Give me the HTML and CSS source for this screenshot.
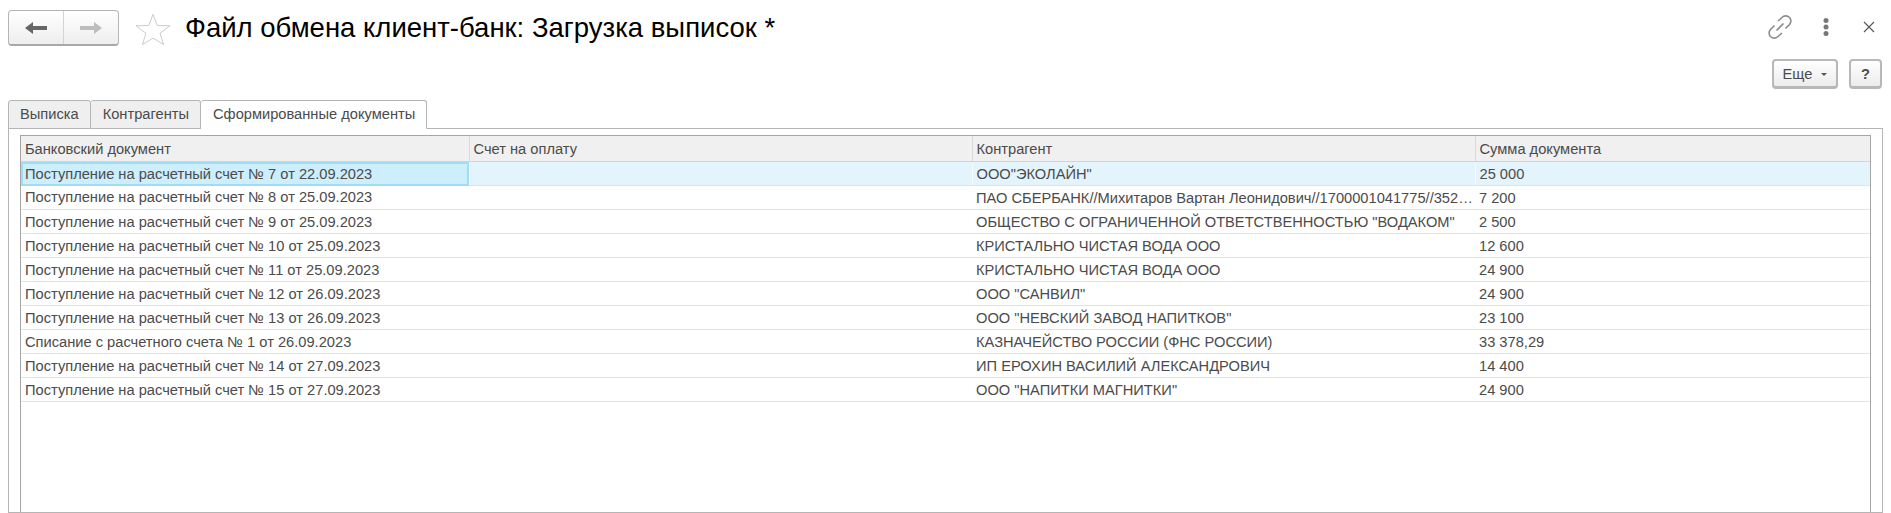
FILE: index.html
```html
<!DOCTYPE html>
<html lang="ru">

<head>
  <meta charset="UTF-8">
  <title>Файл обмена клиент-банк: Загрузка выписок</title>
  <link rel="stylesheet" href="styles.css">
</head>

<body>
  <div class="top-bar">
    <div class="nav-buttons">
      <button class="nav-btn">
        <svg width="22" height="14" viewBox="0 0 22 14"><path d="M0 7 L8 1 V5 H22 V9 H8 V13 Z" fill="#666"/></svg>
      </button>
      <button class="nav-btn">
        <svg width="22" height="14" viewBox="0 0 22 14"><path d="M22 7 L14 1 V5 H0 V9 H14 V13 Z" fill="#bdbdbd"/></svg>
      </button>
    </div>
    <svg class="star" width="36" height="33" viewBox="0 0 38 34"><path d="M19 1 L23.5 12.8 L37 13 L26.4 21 L30.2 33 L19 26 L7.8 33 L11.6 21 L1 13 L14.5 12.8 Z" fill="#fff" stroke="#c8c8c8"/></svg>
    <h1 class="title">Файл обмена клиент-банк: Загрузка выписок *</h1>
    <div class="top-icons">
      <svg class="icon-link" width="26" height="26" viewBox="0 0 26 26" fill="none" stroke="#8a8a8a" stroke-width="1.6"><path d="M11 7 L15 3.5 A5 5 0 0 1 22.5 10.5 L18.5 14.5"/><path d="M15 19 L11 22.5 A5 5 0 0 1 3.5 15.5 L7.5 11.5"/><path d="M9.5 16.5 L16.5 9.5"/></svg>
      <svg class="icon-dots" width="8" height="20" viewBox="0 0 8 20" fill="#777"><circle cx="4" cy="3.5" r="2.5"/><circle cx="4" cy="10" r="2.5"/><circle cx="4" cy="16.5" r="2.5"/></svg>
      <svg width="12" height="12" viewBox="0 0 12 12" stroke="#555" stroke-width="1.1"><path d="M1 1 L11 11 M11 1 L1 11"/></svg>
    </div>
  </div>

  <div class="command-bar">
    <button class="cmd-btn more-btn">Еще <span class="caret"></span></button>
    <button class="cmd-btn help-btn">?</button>
  </div>

  <div class="tabs">
    <div class="tab">Выписка</div>
    <div class="tab">Контрагенты</div>
    <div class="tab active">Сформированные документы</div>
  </div>

  <div class="panel">
    <div class="grid">
      <table>
        <colgroup>
          <col class="col-doc">
          <col class="col-invoice">
          <col class="col-partner">
          <col>
        </colgroup>
        <thead>
          <tr>
            <th>Банковский документ</th>
            <th>Счет на оплату</th>
            <th>Контрагент</th>
            <th>Сумма документа</th>
          </tr>
        </thead>
        <tbody>
          <tr class="current">
            <td class="focused">Поступление на расчетный счет № 7 от 22.09.2023</td>
            <td></td>
            <td>ООО"ЭКОЛАЙН"</td>
            <td>25 000</td>
          </tr>
          <tr>
            <td>Поступление на расчетный счет № 8 от 25.09.2023</td>
            <td></td>
            <td>ПАО СБЕРБАНК//Михитаров Вартан Леонидович//1700001041775//352…</td>
            <td>7 200</td>
          </tr>
          <tr>
            <td>Поступление на расчетный счет № 9 от 25.09.2023</td>
            <td></td>
            <td>ОБЩЕСТВО С ОГРАНИЧЕННОЙ ОТВЕТСТВЕННОСТЬЮ "ВОДАКОМ"</td>
            <td>2 500</td>
          </tr>
          <tr>
            <td>Поступление на расчетный счет № 10 от 25.09.2023</td>
            <td></td>
            <td>КРИСТАЛЬНО ЧИСТАЯ ВОДА ООО</td>
            <td>12 600</td>
          </tr>
          <tr>
            <td>Поступление на расчетный счет № 11 от 25.09.2023</td>
            <td></td>
            <td>КРИСТАЛЬНО ЧИСТАЯ ВОДА ООО</td>
            <td>24 900</td>
          </tr>
          <tr>
            <td>Поступление на расчетный счет № 12 от 26.09.2023</td>
            <td></td>
            <td>ООО "САНВИЛ"</td>
            <td>24 900</td>
          </tr>
          <tr>
            <td>Поступление на расчетный счет № 13 от 26.09.2023</td>
            <td></td>
            <td>ООО "НЕВСКИЙ ЗАВОД НАПИТКОВ"</td>
            <td>23 100</td>
          </tr>
          <tr>
            <td>Списание с расчетного счета № 1 от 26.09.2023</td>
            <td></td>
            <td>КАЗНАЧЕЙСТВО РОССИИ (ФНС РОССИИ)</td>
            <td>33 378,29</td>
          </tr>
          <tr>
            <td>Поступление на расчетный счет № 14 от 27.09.2023</td>
            <td></td>
            <td>ИП ЕРОХИН ВАСИЛИЙ АЛЕКСАНДРОВИЧ</td>
            <td>14 400</td>
          </tr>
          <tr>
            <td>Поступление на расчетный счет № 15 от 27.09.2023</td>
            <td></td>
            <td>ООО "НАПИТКИ МАГНИТКИ"</td>
            <td>24 900</td>
          </tr>
        </tbody>
      </table>
    </div>
  </div>
</body>

</html>
```

FILE: styles.css
```css
html,
body {
  height: 100%;
}

body {
  margin: 0;
  padding: 0 8px;
  box-sizing: border-box;
  overflow: hidden;
  display: flex;
  flex-direction: column;
  background: #fff;
  color: #4b4b4b;
  font-family: "Liberation Sans", Arial, sans-serif;
  font-size: 14.67px;
}

.top-bar {
  height: 58px;
  padding-top: 10px;
  box-sizing: border-box;
  display: flex;
  align-items: flex-start;
  flex: none;
}

.nav-buttons {
  display: flex;
  width: 111px;
  height: 36px;
  box-sizing: border-box;
  border: 1px solid #b5b5b5;
  border-bottom: 2px solid #a8a8a8;
  border-radius: 4px;
  background: linear-gradient(#fff, #eeeeee);
}

.nav-btn {
  flex: 1;
  padding: 0;
  border: 0;
  background: none;
  display: flex;
  align-items: center;
  justify-content: center;
}

.nav-btn + .nav-btn {
  border-left: 1px solid #d4d4d4;
}

.star {
  margin: 3px 0 0 16px;
  flex: none;
}

.title {
  margin: 3px 0 0 14px;
  color: #000;
  font-size: 27.5px;
  font-weight: normal;
  line-height: 30px;
  white-space: nowrap;
}

.top-icons {
  margin-left: auto;
  padding: 4px 8px 0 0;
  display: flex;
  align-items: center;
  height: 26px;
}

.icon-dots {
  margin: 0 33px 0 29px;
}

.command-bar {
  height: 42px;
  flex: none;
  display: flex;
  justify-content: flex-end;
  align-items: flex-start;
  gap: 11px;
  padding: 1px 1px 0 0;
  box-sizing: border-box;
}

.cmd-btn {
  height: 30px;
  box-sizing: border-box;
  border: 2px solid #b8b8b8;
  border-bottom-width: 3px;
  border-radius: 4px;
  background: linear-gradient(#fff, #ececec);
  color: #4b4b4b;
  font-family: inherit;
  font-size: 14.67px;
  padding: 0;
}

.more-btn {
  width: 66px;
}

.help-btn {
  width: 33px;
  font-weight: bold;
}

.caret {
  display: inline-block;
  margin-left: 5px;
  vertical-align: middle;
  border: 3px solid transparent;
  border-top: 3px solid #555;
  border-bottom: 0;
}

.tabs {
  display: flex;
  height: 29px;
  flex: none;
  margin-bottom: -1px;
  position: relative;
}

.tab {
  height: 29px;
  box-sizing: border-box;
  padding: 5px 11px 0 12px;
  border: 1px solid #b5b5b5;
  border-left: 0;
  border-bottom: 1px solid #b5b5b5;
  border-radius: 3px 3px 0 0;
  background: #efefef;
}

.tab:first-child {
  border-left: 1px solid #b5b5b5;
  padding-left: 11px;
}

.tab.active {
  background: #fff;
  border-bottom-color: #fff;
}

.panel {
  flex: 1;
  border: 1px solid #b5b5b5;
  padding: 6px 11px 0;
  min-height: 0;
}

.grid {
  height: 100%;
  box-sizing: border-box;
  border: 1px solid #a5a5a5;
  border-bottom: 0;
}

table {
  width: 100%;
  table-layout: fixed;
  border-collapse: collapse;
}

.col-doc {
  width: 448px;
}

.col-invoice {
  width: 503px;
}

.col-partner {
  width: 503px;
}

th {
  height: 25px;
  padding: 0 4px;
  background: #f0f0f0;
  border-left: 1px solid #d9d9d9;
  border-bottom: 1px solid #d4d4d4;
  font-weight: normal;
  text-align: left;
}

th:first-child,
td:first-child {
  border-left: 0;
}

td {
  height: 24px;
  box-sizing: border-box;
  padding: 0 4px;
  border-bottom: 1px solid #e3e3e3;
  white-space: nowrap;
  overflow: hidden;
}

.current td {
  background: #e4f4fd;
  border-left: 1px solid #f4fbff;
}

.current td.focused {
  background: #cdeefc;
  border: 0;
  box-shadow: inset 0 0 0 2px #a0dcf4;
}
```
